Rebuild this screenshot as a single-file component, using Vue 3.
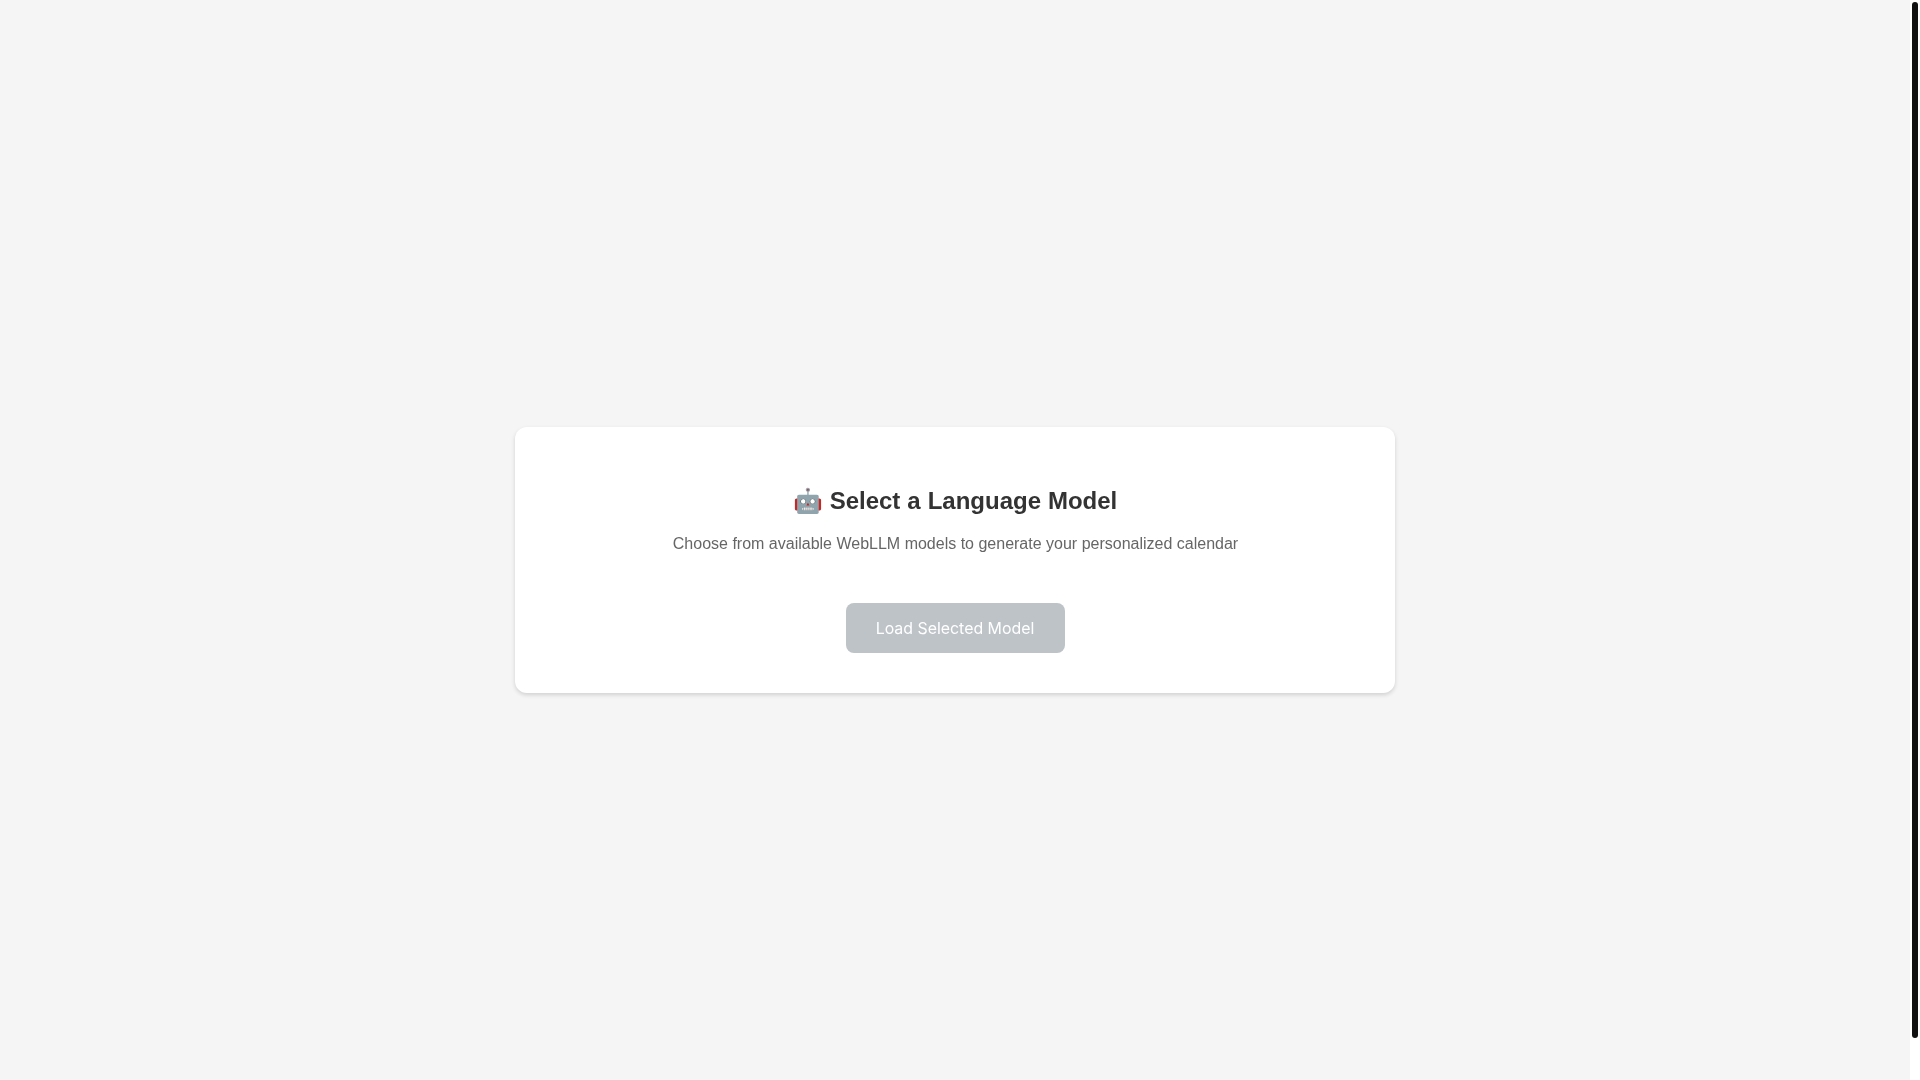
<script setup>
const title = '🤖 Select a Language Model'
const subtitle = 'Choose from available WebLLM models to generate your personalized calendar'
</script>

<template>
  <div class="window">
    <main class="page">
      <section class="card">
        <h2 class="title">{{ title }}</h2>
        <p class="subtitle">{{ subtitle }}</p>
        <button class="load" type="button" disabled>Load Selected Model</button>
      </section>
    </main>
    <aside class="scrollbar"><div class="thumb"></div></aside>
  </div>
</template>

<style scoped>
.window {
  display: flex;
  height: 1080px;
  overflow: hidden;
  background: #fff;
}
.page {
  box-sizing: border-box;
  flex: 1;
  height: 1120px;
  padding: 20px;
  background: #f5f5f5;
  display: flex;
  align-items: center;
  justify-content: center;
  font-family: "Liberation Sans", Arial, sans-serif;
}
.card {
  box-sizing: border-box;
  width: 880px;
  height: 266px;
  padding: 40px;
  background: #fff;
  border-radius: 12px;
  box-shadow: 0 2px 4px rgba(0, 0, 0, 0.15);
  display: flex;
  flex-direction: column;
  align-items: center;
  will-change: transform;
}
.title {
  margin: 20px 0 20px;
  font-size: 24px;
  line-height: 28px;
  font-weight: 700;
  color: #333;
  word-spacing: 0.3px;
}
.subtitle {
  margin: 0 0 50px;
  font-size: 16px;
  line-height: 18px;
  color: #666;
  padding-left: 1px;
}
.load {
  width: 219px;
  height: 50px;
  flex: none;
  border: 0;
  border-radius: 8px;
  background: #bdc3c7;
  color: #fff;
  font-family: Inter, sans-serif;
  font-size: 15.9px;
  font-weight: 400;
  padding: 0;
}
.scrollbar {
  box-sizing: border-box;
  flex: none;
  width: 10px;
  height: 1038px;
  padding: 2px 2px 0;
}
.thumb {
  height: 100%;
  background: #111;
  border-radius: 3px;
}
</style>
